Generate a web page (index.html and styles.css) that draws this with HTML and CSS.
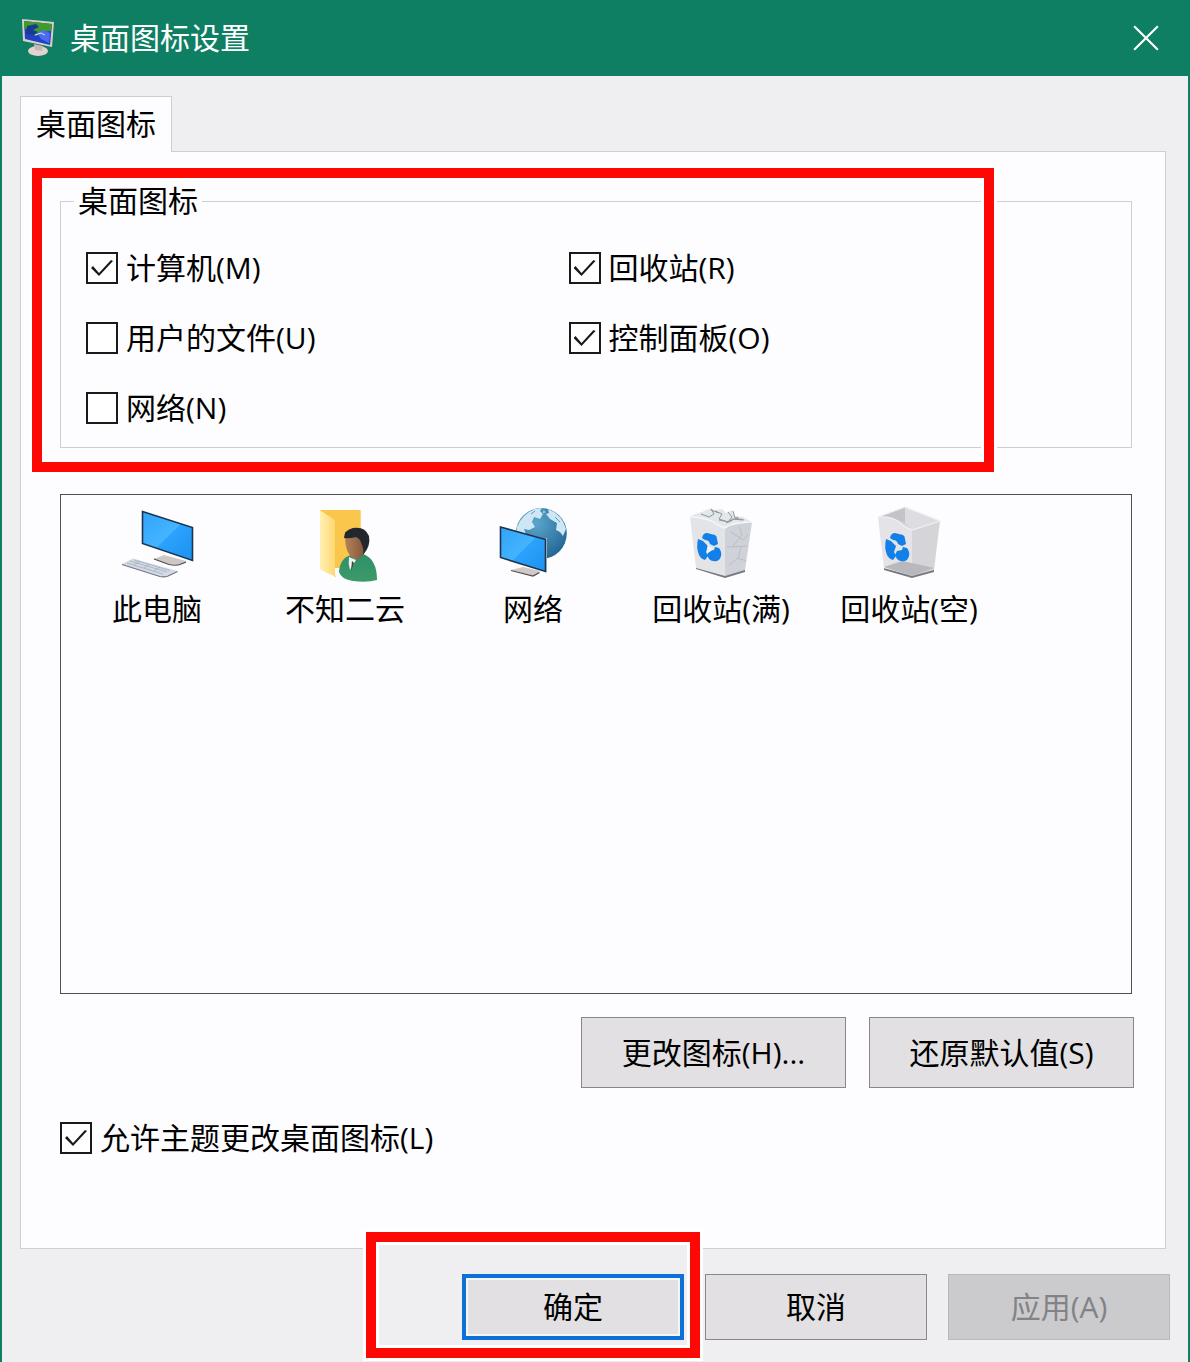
FILE: index.html
```html
<!DOCTYPE html>
<html lang="zh-CN">
<head>
    <meta charset="UTF-8">
    <meta name="viewport" content="width=device-width, initial-scale=1.0">
    <title>桌面图标设置</title>
    <link rel="stylesheet" href="styles.css">
</head>
<body>
    <div class="dialog">
        <header class="title-bar">
            <svg class="title-icon" viewBox="0 0 36 42" aria-hidden="true">
                <ellipse cx="18" cy="34" rx="10" ry="5" fill="#e4d3cf"/>
                <path d="M14 27l9 2-1 5-7-1z" fill="#c9b8b8"/>
                <path d="M2 2l32 3-2 25L3 24z" fill="#d9cfc6"/>
                <path d="M4 4l28 3-2 21L5 22z" fill="#2340c8"/>
                <path d="M4 4l28 3-1 7-8 1-7 4-5-2 3-6-10 1z" fill="#3f9c2c"/>
                <path d="M7 9l9-2 3 3-6 3 5 2-4 3-8-1z" fill="#173a94"/>
                <path d="M17 16l6-3 7 3-1 10-8-4z" fill="#4b6cf0"/>
                <path d="M15 18l6-2 4 2" fill="none" stroke="#d6e6f2" stroke-width="1"/>
            </svg>
            <h1 class="title">桌面图标设置</h1>
            <button class="close" type="button" aria-label="关闭">
                <svg viewBox="0 0 26 26" aria-hidden="true">
                    <path d="M2 2l22 22M24 2L2 24" stroke="#fff" stroke-width="2" fill="none"/>
                </svg>
            </button>
        </header>

        <form class="content">
            <div class="tabs" role="tablist">
                <button class="tab" type="button" role="tab" aria-selected="true">桌面图标</button>
            </div>

            <div class="panel">
                <div class="group-wrap">
                    <fieldset class="group">
                        <legend>桌面图标</legend>
                        <div class="checks">
                            <label class="check"><input type="checkbox" checked>计算机(M)</label>
                            <label class="check"><input type="checkbox" checked>回收站(R)</label>
                            <label class="check"><input type="checkbox">用户的文件(U)</label>
                            <label class="check"><input type="checkbox" checked>控制面板(O)</label>
                            <label class="check"><input type="checkbox">网络(N)</label>
                        </div>
                    </fieldset>
                    <div class="mark mark-group"></div>
                </div>

                <ul class="icon-list">
                    <li class="icon-item">
                        <svg viewBox="0 0 80 80" aria-hidden="true">
                            <defs>
                                <linearGradient id="screen" x1="0" y1="0" x2="1" y2="1">
                                    <stop offset="0" stop-color="#2fa4fa"/>
                                    <stop offset=".5" stop-color="#45b4ff"/>
                                    <stop offset=".52" stop-color="#2ba2fb"/>
                                    <stop offset="1" stop-color="#1c91f2"/>
                                </linearGradient>
                            </defs>
                            <path d="M37 54l10-4 22 6-1 2-7 2-9-1z" fill="#cfc6c6"/>
                            <path d="M37 54l15 5.500q7 1.500 11 0l6-2.500" fill="none" stroke="#4a4a52" stroke-width="1.200"/>
                            <path d="M5 59l11-5.500L60.500 66 47 72z" fill="#d3dae6"/>
                            <path d="M5 59.500l38 12q4 1 8-.5l9.500-4.500" fill="none" stroke="#6a7280" stroke-width="1.200"/>
                            <path d="M10 58l36 11M13 56l37 11M17 55l36 10.500M17 60l6-4M27 63l6-4M37 66l6-4" stroke="#a3adbe" stroke-width=".8" fill="none"/>
                            <path d="M25.500 6.500l50 16v33l-50-17z" fill="url(#screen)" stroke="#1e3550" stroke-width="1.600"/>
                        </svg>
                        <span>此电脑</span>
                    </li>
                    <li class="icon-item">
                        <svg viewBox="0 0 80 80" aria-hidden="true">
                            <defs>
                                <linearGradient id="folder" x1="0" y1="0" x2="1" y2="0">
                                    <stop offset="0" stop-color="#fff0b4"/>
                                    <stop offset="1" stop-color="#ffd66c"/>
                                </linearGradient>
                                <linearGradient id="skin" x1="0" y1="0" x2="1" y2="0">
                                    <stop offset="0" stop-color="#b5825b"/>
                                    <stop offset="1" stop-color="#7c5135"/>
                                </linearGradient>
                                <linearGradient id="coat" x1="0" y1="0" x2="0" y2="1">
                                    <stop offset="0" stop-color="#2f8f6a"/>
                                    <stop offset="1" stop-color="#3b9b67"/>
                                </linearGradient>
                            </defs>
                            <path d="M15 5h40.700v58H30z" fill="#fbc64c"/>
                            <path d="M15 5q1 1 12 8 3 2 3 4v51q0 2 1 4.500-1 0-3-2l-13-6z" fill="url(#folder)"/>
                            <path d="M34 67q1-14 12-17l12-1q14 5 14 26-10 3-24 1-12-2-14-9z" fill="url(#coat)"/>
                            <path d="M44 52l7 3-6 10q-2-6-1-13z" fill="#f3f3f0"/>
                            <path d="M47 56l2 2-3 8z" fill="#2d4a48"/>
                            <path d="M40 32q0-5 10-6 12 0 12 10 0 8-4 14-5 6-10 3-8-5-8-21z" fill="url(#skin)"/>
                            <path d="M39 33q0-8 9-10 12-2 16 8 2 10-6 19 1-6-1-10-2-7-6-8-7 2-12 1z" fill="#22272e"/>
                        </svg>
                        <span>不知二云</span>
                    </li>
                    <li class="icon-item">
                        <svg viewBox="0 0 80 80" aria-hidden="true">
                            <defs>
                                <radialGradient id="globe" cx=".4" cy=".3" r=".8">
                                    <stop offset="0" stop-color="#5ba5cb"/>
                                    <stop offset="1" stop-color="#1d618f"/>
                                </radialGradient>
                            </defs>
                            <circle cx="48.300" cy="28.500" r="25.500" fill="url(#globe)"/>
                            <path d="M24 22q5-13 18-18l7-1-2 3 3 3-3 5-6-2-2 5 3 5-6 3-5-1 2 5 4 3-10-2-4-2z" fill="#cfe6f4"/>
                            <path d="M55 4q14 5 18 20l-3 7-3-4-4-2 1-7-7-4-4-5 3-1z" fill="#cfe6f4"/>
                            <path d="M50 5l3 2-3 2zM38 9l4-3M62 12l5 5" fill="#d8eaf5" stroke="#5b9fc4" stroke-width="1"/>
                            <path d="M18 65l12-3 17 4-2 3-4 2z" fill="#d2c8c6"/>
                            <path d="M18 65.500l22 5.500 6.500-3.500" fill="none" stroke="#4c4c52" stroke-width="1.200"/>
                            <path d="M52 34l2-1v34l-1.500 1z" fill="#d8d6c8"/>
                            <path d="M7.500 22l45 12.500v32l-45-14z" fill="url(#screen)" stroke="#1e3550" stroke-width="1.600"/>
                        </svg>
                        <span>网络</span>
                    </li>
                    <li class="icon-item">
                        <svg viewBox="0 0 80 80" aria-hidden="true">
                            <path d="M15 62l29 8 20-6v3l-20 6-29-9z" fill="#77797e"/>
                            <path d="M9 12q3-3 12-5l9-4 4 2 7-1 4 4 6-3 3 6 8 1 9 5-27 9z" fill="#e4e7ea"/>
                            <path d="M9 12q18 0 28 8l7 3v48L15 63z" fill="#e3e4e8"/>
                            <path d="M44 23q4-5 27-6l-7 48-20 6z" fill="#cfd2d8"/>
                            <path d="M9 12q18 0 28 8l7 3q5-5 27-6" fill="none" stroke="#f5f6f8" stroke-width="1.500"/>
                            <path d="M20 9l8 3 5-3-3-5M34 6l7 3-3 5 9 3 4-5-4-5M38 15l10 2 9-5M52 6l2 7 9 2M30 5l8 3M45 18l7-4 9 1" fill="none" stroke="#8e969c" stroke-width="1"/>
                            <path d="M46 42l20-1M50 27l12 8 5-5M48 60l9-7 8 3M58 21l3 9-9 11M60 42l-3 12" fill="none" stroke="#b9bec5" stroke-width="1"/>
                            <g id="recycle" fill="#1280e8">
                                <path d="M21 33q1-5 5-5l8 2q2 1 2 4l1 5-4 2-4-2q-1-4-5-4z"/>
                                <path d="M17 34l5 2 5 5-2 6 2 4-3 4q-4-1-6-5-3-7-1-16z"/>
                                <path d="M28 46l5-1 1-3 4 1q3 4 2 8-1 4-4 5-5 1-8-2l-2-4z"/>
                            </g>
                            <path d="M27 39l2 3 3 1-2 3-3 2-1-4z" fill="#f2f5ee"/>
                        </svg>
                        <span>回收站(满)</span>
                    </li>
                    <li class="icon-item">
                        <svg viewBox="0 0 80 80" aria-hidden="true">
                            <path d="M15 63l28 7 22-6v3l-22 6-28-8z" fill="#77797e"/>
                            <path d="M9 12l27-10 35 14-28 9z" fill="#d4d3d7"/>
                            <path d="M36 2v16l-12-5-15-1z" fill="#c4c3c7"/>
                            <path d="M36 2l35 14-28 9-7-7z" fill="#dddce0"/>
                            <path d="M9 12q14-1 22 6l12 7v46l-28-8z" fill="#e4e3e7"/>
                            <path d="M43 25l28-9-6 49-22 6z" fill="#d5d4d8"/>
                            <path d="M15 62l18-6 10 2v13zM43 58l22 5-22 8z" fill="#b9b9bd"/>
                            <path d="M9 12l27-10 35 14-28 9q-8-3-13-8-8-6-21-5z" fill="none" stroke="#f0eff3" stroke-width="1.200"/>
                            <use href="#recycle"/>
                        </svg>
                        <span>回收站(空)</span>
                    </li>
                </ul>

                <div class="icon-actions">
                    <button class="btn btn-large" type="button">更改图标(H)...</button>
                    <button class="btn btn-large" type="button">还原默认值(S)</button>
                </div>

                <label class="check"><input type="checkbox" checked>允许主题更改桌面图标(L)</label>
            </div>

            <footer class="footer">
                <div class="ok-wrap">
                    <div class="mark mark-ok"></div>
                    <button class="btn btn-default" type="submit">确定</button>
                </div>
                <button class="btn" type="button">取消</button>
                <button class="btn" type="button" disabled>应用(A)</button>
            </footer>
        </form>
    </div>
</body>
</html>
```

FILE: styles.css
```css
* {
    box-sizing: border-box;
}

body {
    margin: 0;
    font-family: "Open Sans", "Noto Sans CJK SC", sans-serif;
    font-size: 30px;
    font-weight: 390;
    line-height: 40px;
    color: #000;
    background-color: #efeef0;
}

button {
    font: inherit;
    color: inherit;
    padding: 0;
    border: none;
    background: none;
}

.dialog {
    min-height: 100vh;
    border: 2px solid #0f7f63;
    border-top: none;
    border-bottom: none;
}

/* Title bar */
.title-bar {
    display: flex;
    align-items: center;
    height: 76px;
    padding: 0 28px 0 18px;
    background-color: #0f7f63;
    color: #fff;
}

.title-icon {
    width: 36px;
    height: 42px;
    margin-right: 14px;
}

.title {
    flex: 1;
    margin: 0;
    font-size: 30px;
    font-weight: 390;
}

.close {
    display: flex;
}

.close svg {
    width: 28px;
    height: 28px;
}

.content {
    padding: 20px 18px 22px;
}

/* Tabs */
.tabs {
    display: flex;
}

.tab {
    position: relative;
    z-index: 1;
    height: 56px;
    margin-bottom: -1px;
    padding: 0 15px 2px;
    border: 1px solid #cfced2;
    border-bottom: none;
    background-color: #fdfcfe;
}

.panel {
    margin-right: 4px;
    padding: 29px 33px 90px 39px;
    border: 1px solid #cfced2;
    background-color: #fdfcfe;
}

/* Group of check boxes */
.group-wrap {
    position: relative;
}

.group {
    margin: 0;
    padding: 12px 80px 4px 25px;
    border: 1px solid #cfced2;
}

.group legend {
    margin-left: -12px;
    padding: 0 4px;
}

.checks {
    display: grid;
    grid-template-columns: 1fr 1fr;
    grid-auto-rows: 70px;
}

.check {
    display: flex;
    align-items: center;
    gap: 8px;
}

.check input {
    appearance: none;
    display: grid;
    place-content: center;
    width: 32px;
    height: 32px;
    margin: 0;
    border: 2px solid #1a1a1a;
    background-color: #fff;
}

.check input:checked::before {
    content: "";
    width: 22px;
    height: 16px;
    background-color: #1a1a1a;
    clip-path: polygon(0 8px, 2px 6px, 8px 13px, 20px 0, 22px 1px, 8px 16px);
}

/* Red highlight frames */
.mark {
    position: absolute;
    border: 10px solid #fe0805;
    box-shadow: 0 0 0 3px #fff, inset 0 0 0 3px #fff;
    pointer-events: none;
}

.mark-group {
    top: -13px;
    right: 138px;
    bottom: -24px;
    left: -28px;
}

.mark-ok {
    top: -42px;
    right: -16px;
    bottom: -18px;
    left: -96px;
    background-color: #efeef0;
}

/* Icon preview list */
.icon-list {
    display: flex;
    flex-wrap: wrap;
    align-content: flex-start;
    height: 500px;
    margin: 46px 0 23px;
    padding: 10px 2px;
    border: 1px solid #4e4e58;
    list-style: none;
}

.icon-item {
    display: flex;
    flex-direction: column;
    align-items: center;
    gap: 4px;
    width: 188px;
}

.icon-item svg {
    width: 80px;
    height: 80px;
}

/* Buttons */
.btn {
    width: 222px;
    height: 66px;
    border: 1px solid #88878b;
    background-color: #e2e0e2;
}

.btn-large {
    width: 265px;
    height: 71px;
}

.btn-default {
    position: relative;
    border: 4px solid #0d6fd8;
    box-shadow: inset 0 0 0 2px #f5f5f8;
}

.btn:disabled {
    color: #838286;
    border-color: #b9b8bb;
    background-color: #cbcacc;
}

.icon-actions {
    display: flex;
    justify-content: flex-end;
    gap: 23px;
    margin-right: -2px;
    margin-bottom: 30px;
}

.footer {
    display: flex;
    justify-content: flex-end;
    gap: 21px;
    margin-top: 25px;
}

.ok-wrap {
    position: relative;
}
```
